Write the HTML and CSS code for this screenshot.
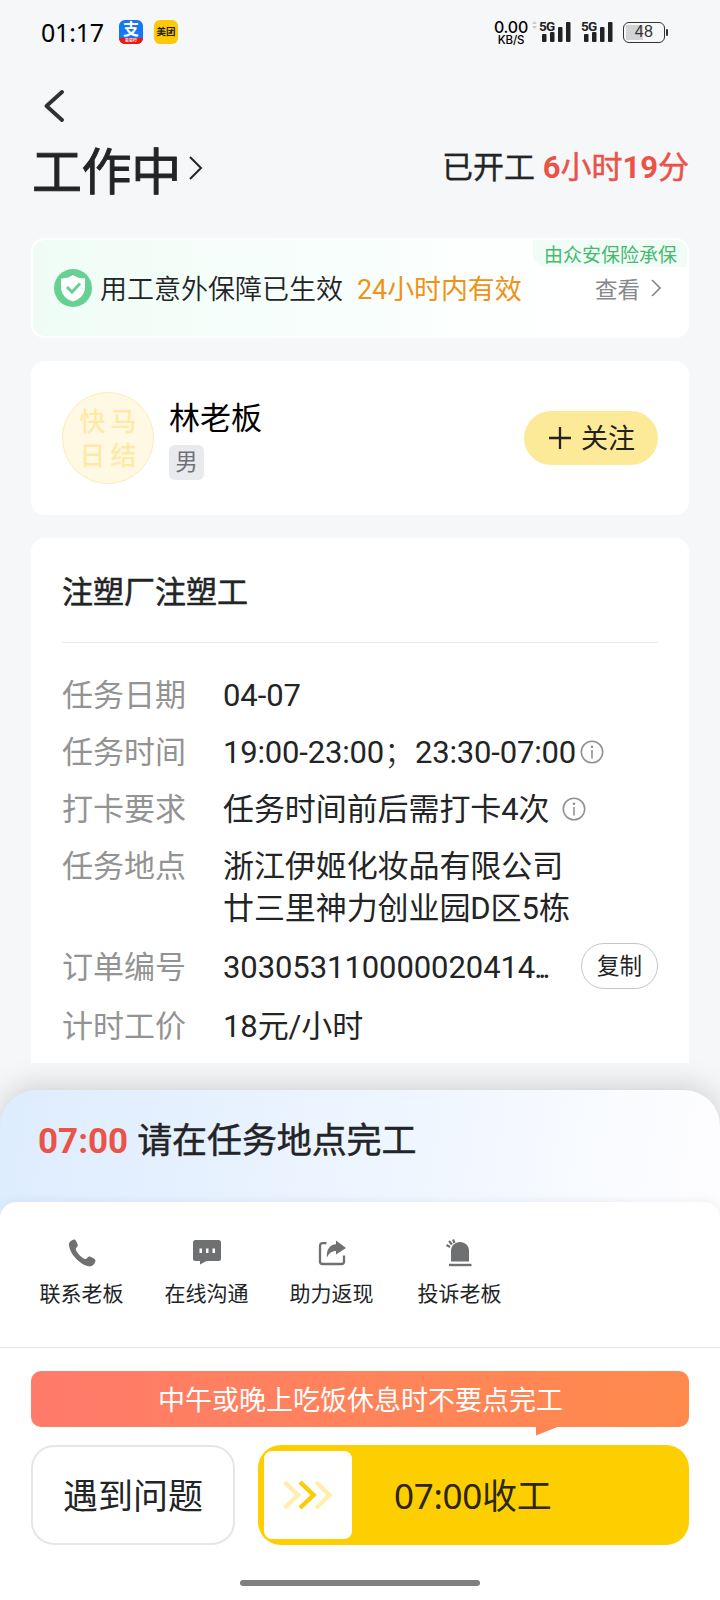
FILE: index.html
```html
<!DOCTYPE html>
<html lang="zh-CN">
<head>
<meta charset="utf-8">
<title>工作中</title>
<link rel="stylesheet" href="styles.css">
</head>
<body>
<div class="screen">
  <header class="status">
    <span class="clock">01:17</span>
    <span class="app app-pay"><span class="pay-mark">支</span><span class="pay-strip">易易行</span></span>
    <span class="app app-mt">美团</span>
    <span class="net"><b>0.00</b><i>KB/S</i></span>
    <svg class="updown" width="5" height="8" viewBox="0 0 5 8"><path d="M0 3L2.500 0L5 3ZM0 5L2.500 8L5 5Z" fill="#c9cacc"/></svg>
    <span class="signal"><span class="gen">5G</span>
      <svg width="31" height="22" viewBox="0 0 31 22"><g fill="#222"><rect x="2" y="14" width="4.500" height="8" rx="1"/><rect x="10" y="12" width="4.500" height="10" rx="1"/><rect x="18" y="7" width="4.500" height="15" rx="1"/><rect x="26" y="2" width="4.500" height="20" rx="1"/></g></svg></span>
    <span class="signal second"><span class="gen">5G</span>
      <svg width="31" height="22" viewBox="0 0 31 22"><g fill="#222"><rect x="2" y="14" width="4.500" height="8" rx="1"/><rect x="10" y="12" width="4.500" height="10" rx="1"/><rect x="18" y="7" width="4.500" height="15" rx="1"/><rect x="26" y="2" width="4.500" height="20" rx="1"/></g></svg></span>
    <span class="battery">48</span>
  </header>

  <nav class="nav">
    <svg width="20" height="32" viewBox="0 0 20 32"><path d="M18 2L2.500 16L18 30" fill="none" stroke="#303133" stroke-width="3.800" stroke-linecap="round" stroke-linejoin="round"/></svg>
  </nav>

  <section class="title-row">
    <h1>工作中</h1>
    <svg class="title-arrow" width="14" height="24" viewBox="0 0 14 24"><path d="M1 1L12 12L1 23" fill="none" stroke="#222426" stroke-width="2"/></svg>
    <p class="elapsed">已开工 <strong>6<span>小时</span>19<span>分</span></strong></p>
  </section>

  <section class="card insure">
    <svg class="shield" width="38" height="38" viewBox="0 0 38 38"><circle cx="19" cy="19" r="19" fill="#66d192"/><path d="M19 6C22.500 8.500 26.500 9.500 31 9.500V18C31 25 26.500 30 19 32.500C11.500 30 7 25 7 18V9.500C11.500 9.500 15.500 8.500 19 6Z" fill="#fff"/><path d="M13 18L18 23L26 14.500" fill="none" stroke="#66d192" stroke-width="3"/></svg>
    <span class="insure-text">用工意外保障已生效</span>
    <span class="insure-valid">24小时内有效</span>
    <span class="insure-view">查看</span>
    <svg class="view-arrow" width="10" height="18" viewBox="0 0 10 18"><path d="M1 1L9 9L1 17" fill="none" stroke="#88898c" stroke-width="1.700"/></svg>
    <span class="insure-tag">由众安保险承保</span>
  </section>

  <section class="card boss">
    <div class="avatar"><span>快</span><span>马</span><span>日</span><span>结</span></div>
    <div class="boss-info"><div class="boss-name">林老板</div><span class="gender">男</span></div>
    <div class="follow"><svg width="22" height="22" viewBox="0 0 22 22"><path d="M11 0V22M0 11H22" stroke="#24221b" stroke-width="2.300"/></svg><span>关注</span></div>
  </section>

  <section class="card task">
    <h2>注塑厂注塑工</h2>
    <dl>
      <div class="row"><dt>任务日期</dt><dd>04-07</dd></div>
      <div class="row"><dt>任务时间</dt><dd class="times">19:00-23:00<span class="semi">；</span>23:30-07:00</dd><svg class="info" width="24" height="24" viewBox="0 0 24 24"><circle cx="12" cy="12" r="10.700" fill="none" stroke="#929292" stroke-width="1.600"/><path d="M12 10V18.500" stroke="#929292" stroke-width="1.600"/><circle cx="12" cy="6.800" r="1.300" fill="#929292"/></svg></div>
      <div class="row"><dt>打卡要求</dt><dd>任务时间前后需打卡4次</dd><svg class="info gap" width="24" height="24" viewBox="0 0 24 24"><circle cx="12" cy="12" r="10.700" fill="none" stroke="#929292" stroke-width="1.600"/><path d="M12 10V18.500" stroke="#929292" stroke-width="1.600"/><circle cx="12" cy="6.800" r="1.300" fill="#929292"/></svg></div>
      <div class="row place"><dt>任务地点</dt><dd>浙江伊姬化妆品有限公司<br>廿三里神力创业园D区5栋</dd></div>
      <div class="row order"><dt>订单编号</dt><dd class="number">303053110000020414<span class="dots">...</span></dd><span class="copy">复制</span></div>
      <div class="row"><dt>计时工价</dt><dd>18元/小时</dd></div>
    </dl>
  </section>

  <section class="sheet">
    <p class="notice"><strong>07:00</strong><span>请在任务地点完工</span></p>
    <div class="panel">
      <div class="actions">
        <div class="action"><svg width="28" height="28" viewBox="0 0 28 28"><path d="M1 5C1 3 4 .5 6.500 .5C7.500 .5 10 5 9.800 6.500C9.600 8 7.500 8.800 7.800 10.500C8.500 13.500 13.500 19 17 20C18.800 20.300 19.500 18 21 17.500C22.500 17.200 27.500 20 27.500 21.500C27.500 24.500 24 27.500 21.500 27.500C12 26 1 14.500 1 5Z" fill="#6f7072"/></svg><span>联系老板</span></div>
        <div class="action"><svg width="28" height="28" viewBox="0 0 28 28"><path d="M3 1H25.500Q28 1 28 3.500V19.500Q28 22 25.500 22H13.500L7 25.500V22H2.500Q0 22 0 19.500V3.500Q0 1 2.500 1Z" fill="#6f7072"/><path d="M6.500 9.500H9V14H6.500ZM13 9.500H15.500V14H13ZM19.500 9.500H22V14H19.500Z" fill="#fff"/></svg><span>在线沟通</span></div>
        <div class="action"><svg width="28" height="28" viewBox="0 0 28 28"><path d="M8.500 4.200H4.500Q2 4.200 2 7V22.500Q2 25 4.500 25H23.500Q26 25 26 22.500V16.500" fill="none" stroke="#6f7072" stroke-width="2.300"/><path d="M18 1.500L28 9L18 15.500V12C14 12 11 14 9 18.500C8 11 12 5.500 18 5.300Z" fill="#6f7072"/></svg><span>助力返现</span></div>
        <div class="action last"><svg width="28" height="28" viewBox="0 0 28 28"><path d="M5 22.500V12C5 6.500 9 3 14 3S23 6.500 23 12V22.500Z" fill="#6f7072"/><path d="M3 26H25.500" stroke="#6f7072" stroke-width="2.400"/><path d="M.5 6L4 8M3 2L6 5.500M7 .5L8.500 4" stroke="#6f7072" stroke-width="2.200"/></svg><span>投诉老板</span></div>
      </div>
      <div class="footer">
        <div class="tip">中午或晚上吃饭休息时不要点完工<svg class="tail" width="24" height="10" viewBox="0 0 24 10"><path d="M0 0H24L0 9.500Z" fill="#fe8455"/></svg></div>
        <div class="buttons">
          <div class="btn-help">遇到问题</div>
          <div class="btn-finish">
            <span class="thumb"><svg width="50" height="30" viewBox="0 0 50 30"><g fill="none" stroke-width="4.500"><path d="M1.500 2L15 15L1.500 28M33 2L46.500 15L33 28" stroke="#ffeeb0"/><path d="M17 2L30.500 15L17 28" stroke="#fccc08"/></g></svg></span>
            <span class="finish-text">07:00收工</span>
          </div>
        </div>
        <div class="home-bar"></div>
      </div>
    </div>
  </section>
</div>
</body>
</html>
```
FILE: styles.css
```css
* { box-sizing: border-box; margin: 0; padding: 0; }
body { background: #f5f7f9; }
svg { display: block; flex: none; }
.screen {
  width: 720px; height: 1600px; overflow: hidden;
  display: flex; flex-direction: column;
  font-family: Roboto, "Noto Sans CJK SC", sans-serif;
  color: #222426; background: #f5f7f9; white-space: nowrap;
}
.status { height: 64px; padding: 20px 55px 0 41px; display: flex; align-items: flex-start; }
.clock { width: 78px; font: 25px/25px "Noto Sans", sans-serif; color: #000; letter-spacing: -.2px; }
.app { width: 24px; height: 24px; border-radius: 6px; font-family: "Noto Sans CJK SC", sans-serif; }
.app-pay { background: #1677f4; color: #fff; display: flex; flex-direction: column; align-items: center; }
.pay-mark { font-size: 16px; line-height: 16px; font-weight: 700; height: 18px; }
.pay-strip { width: 24px; height: 6px; border-radius: 0 0 6px 6px; background: #f3170e; font-size: 4px; line-height: 5px; text-align: center; font-weight: 700; }
.app-mt { margin-left: 11px; background: #fdc70a; color: #221c05; font-size: 9.500px; line-height: 23px; text-align: center; font-weight: 700; }
.net { margin-left: auto; width: 34px; display: flex; flex-direction: column; align-items: center; color: #000; font-family: Inter, sans-serif; }
.net b { font-size: 16px; line-height: 14px; font-weight: 500; letter-spacing: -.2px; }
.net i { font-style: normal; font-size: 11.500px; line-height: 12px; font-weight: 500; letter-spacing: -.1px; }
.updown { margin: 1px 3px 0 4px; }
.signal { position: relative; width: 31px; }
.second { margin: 0 10px 0 11px; }
.gen { position: absolute; left: -1px; top: -1px; font: 700 13.500px/14px Roboto, sans-serif; letter-spacing: -.8px; color: #222; }
.battery {
  position: relative; width: 42px; height: 21px; margin-top: 2px; border: 1.500px solid #333; border-radius: 6px;
  background: linear-gradient(90deg, #d2d3d4 48%, transparent 48%) 2px 2px / 36px 15px no-repeat;
  font: 16px/18px "Liberation Sans", sans-serif; letter-spacing: .4px; color: #333; text-align: center;
}
.battery::after { content: ""; position: absolute; right: -4px; top: 6px; width: 2px; height: 7px; border-radius: 1px; background: #333; }

.nav { height: 68px; padding: 26px 0 0 44px; }
.title-row { height: 106px; padding: 0 31px 35px 32px; display: flex; align-items: center; }
h1 { font: 400 50px/72px "Noto Sans CJK SC", sans-serif; letter-spacing: -.4px; -webkit-text-stroke: .9px #222426; }
.title-arrow { margin-left: 8px; }
.elapsed { margin-left: auto; font-size: 31px; line-height: 44px; -webkit-text-stroke: .3px currentColor; }
.elapsed strong { color: #ea5348; font-weight: 700; -webkit-text-stroke: 0; }
.elapsed strong span { font-weight: 400; -webkit-text-stroke: .5px #ea5348; }

.card { margin: 0 31px 23px; background: #fff; border-radius: 14px; flex: none; }
.insure {
  position: relative; height: 100px; border: 2px solid #fff; padding: 0 26px 0 21px;
  display: flex; align-items: center; font-size: 27px; line-height: 40px;
  background: linear-gradient(90deg, #effcf5 0%, #f5fefa 30%, #fff 85%);
}
.insure-text { margin-left: 8px; font-family: "Noto Sans CJK SC", sans-serif; font-weight: 350; }
.insure-valid { margin-left: 14px; padding-top: 3px; letter-spacing: -.1px; color: #ee9317; }
.insure-view { margin-left: auto; padding-top: 3px; color: #88898c; font-size: 22.500px; }
.view-arrow { margin-left: 11px; }
.insure-tag {
  position: absolute; right: 0; top: 0; height: 27px; padding: 0 10px 0 11px; background: #f1fcf6;
  border-radius: 0 12px 0 14px; color: #45b970; font-size: 19px; line-height: 31px;
}
.boss { height: 154px; padding: 0 31px; display: flex; align-items: center; }
.avatar {
  width: 92px; height: 92px; border: 1px solid #fbedb8; border-radius: 50%; background: #fff9e3;
  display: grid; grid-template-columns: 31px 31px; grid-template-rows: 34px 34px; place-content: center;
  font: 500 26px/31px "Noto Sans CJK SC", sans-serif; color: #feeaa8; text-align: center;
}
.boss-info { margin-left: 15px; height: 78px; }
.boss-name { font-size: 31px; line-height: 39px; height: 38px; color: #000; }
.gender {
  display: block; width: 35px; height: 35px; margin-top: 8px; border-radius: 6px; background: #e9eaee;
  color: #707175; font-size: 22.500px; line-height: 34px; text-align: center;
}
.follow {
  margin-left: auto; width: 134px; height: 54px; border-radius: 27px; background: #fdea98;
  display: flex; align-items: center; justify-content: center; gap: 10px; padding-left: 2px; font-size: 27px; line-height: 54px; color: #24221b;
}
.follow span { padding-top: 2px; }

.task { height: 525px; margin-bottom: 27px; padding: 0 31px; border-radius: 14px 14px 0 0; }
h2 { height: 105px; border-bottom: 1px solid #e7e8ea; font: 400 31px/103px "Noto Sans CJK SC", sans-serif; -webkit-text-stroke: .5px #222426; }
dl { padding-top: 31px; font-size: 31px; }
.row { height: 57px; display: flex; align-items: flex-start; line-height: 44px; }
dt { width: 161px; color: #939393; }
dd { flex: none; letter-spacing: -.08px; }
.times { letter-spacing: -.18px; }
.semi { display: inline-block; width: 31px; font-weight: 300; }
.info { margin: 9px 0 0 4px; }
.info.gap { margin: 9px 0 0 12px; }
.place { height: 101px; }
.place dd { line-height: 42px; padding-top: 1px; }
.order { height: 59px; }
.dots { letter-spacing: -4px; margin-left: -1px; }
.copy {
  margin: -3px 0 0 auto; width: 77px; height: 46px; border: 1px solid #c4c5c7; border-radius: 23px;
  font-size: 22.500px; line-height: 44px; text-align: center;
}

.sheet {
  flex: 1; display: flex; flex-direction: column; border-radius: 36px 36px 0 0;
  background: linear-gradient(100deg, #ddecfe 0%, #edf5ff 50%, #fdfdff 95%) 0 0 / 100% 150px no-repeat, #fff;
  box-shadow: 0 -4px 30px rgba(0, 0, 0, .16);
}
.notice { height: 112px; padding-left: 38px; display: flex; font-size: 35px; line-height: 103px; }
.notice strong { color: #ea5348; font-weight: 700; }
.notice span { margin-left: 9px; letter-spacing: -.1px; line-height: 104px; -webkit-text-stroke: .5px #222426; }
.panel { flex: 1; background: #fff; border-radius: 16px 16px 0 0; box-shadow: 0 -1px 8px rgba(80, 110, 150, .1); }
.actions { height: 146px; padding: 37px 0 0 39px; display: flex; gap: 41px; border-bottom: 1px solid #e6e6e6; }
.action { width: 85px; margin-right: -1px; display: flex; flex-direction: column; align-items: center; font-size: 21px; line-height: 30px; }
.action span { margin-top: 12px; }
.last { margin-left: 3px; }
.footer { padding: 23px 31px 0; }
.tip {
  position: relative; height: 56px; border-radius: 10px; background: linear-gradient(90deg, #ff7b6a, #ff8a4c);
  color: #fff; font-size: 27px; line-height: 60px; text-align: center; padding-left: 1px;
}
.tail { position: absolute; left: 505px; top: 55px; }
.buttons { margin-top: 18px; display: flex; gap: 23px; height: 100px; font: 35px/98px "Noto Sans", "Noto Sans CJK SC", sans-serif; }
.btn-help { width: 204px; border: 2px solid #e6e6e6; border-radius: 23px; text-align: center; }
.btn-finish { flex: 1; border-radius: 23px; background: #fecf00; padding: 6px; display: flex; }
.thumb { width: 88px; height: 88px; border-radius: 8px; background: #fff; display: flex; align-items: center; justify-content: center; }
.finish-text { margin-left: 42px; line-height: 90px; letter-spacing: -.3px; color: #2c2613; }
.home-bar { width: 240px; height: 6px; margin: 35px auto 0; border-radius: 3px; background: #808080; }
```
